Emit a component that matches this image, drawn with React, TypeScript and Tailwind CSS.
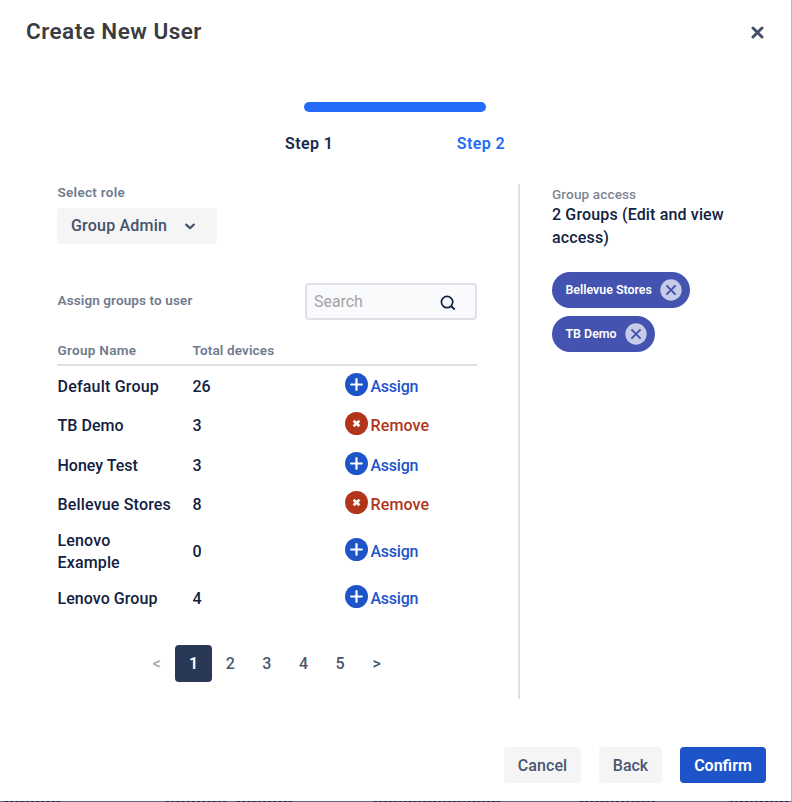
import type { ReactNode } from "react";

type Group = { name: string; devices: number; assigned: boolean; height: string; spacing: string };

const groups: Group[] = [
  { name: "Default Group", devices: 26, assigned: false, height: "h-[39.6px]", spacing: "tracking-[0.2px]" },
  { name: "TB Demo", devices: 3, assigned: true, height: "h-[39.6px]", spacing: "tracking-[0.05px]" },
  { name: "Honey Test", devices: 3, assigned: false, height: "h-[39.6px]", spacing: "tracking-normal" },
  { name: "Bellevue Stores", devices: 8, assigned: true, height: "h-[39.6px]", spacing: "tracking-[0.17px]" },
  { name: "Lenovo Example", devices: 0, assigned: false, height: "h-[54px]", spacing: "tracking-[0.15px]" },
  { name: "Lenovo Group", devices: 4, assigned: false, height: "h-[39.6px]", spacing: "tracking-[0.06px]" },
];

function Action({ assigned }: { assigned: boolean }) {
  return (
    <button className={`flex items-center gap-[2.5px] ${assigned ? "text-[#b1341b]" : "text-[#1d55c8]"}`}>
      <svg className="mb-[3.5px] h-[23px] w-[23px] shrink-0" viewBox="0 0 23 23" fill="none">
        <circle cx="11.5" cy="11.5" r="11.5" fill="currentColor" />
        {assigned ? (
          <path d="M8.6 8.8l5.8 5.4M14.4 8.8l-5.8 5.4" stroke="#fff" strokeWidth="2.6" />
        ) : (
          <path d="M11.5 6.2v10.6M6.2 11.5h10.6" stroke="#fff" strokeWidth="2.2" strokeLinecap="round" />
        )}
      </svg>
      <span className={assigned ? "pt-[2px] tracking-[0.12px]" : "pt-[2px] tracking-[-0.25px]"}>
        {assigned ? "Remove" : "Assign"}
      </span>
    </button>
  );
}

function Chip({ children, width }: { children: ReactNode; width: string }) {
  return (
    <div className={`flex h-9 items-center justify-between rounded-full bg-[#4353af] pr-[7.5px] pl-[13.5px] text-white ${width}`}>
      <span className="text-[12.4px] font-semibold whitespace-nowrap">{children}</span>
      <svg className="h-[22px] w-[22px] shrink-0" viewBox="0 0 22 22" fill="none">
        <circle cx="11" cy="11" r="10.7" fill="#c7cbe7" />
        <path d="M6.4 6.4l9.2 9.2M15.6 6.4l-9.2 9.2" stroke="#4353af" strokeWidth="2" />
      </svg>
    </div>
  );
}

// Sections of the dimmed page text that peek out below the dialog.
const backdropText = [
  { left: "left-[5px]", width: "w-[55px]" },
  { left: "left-[166px]", width: "w-[60px]" },
  { left: "left-[237px]", width: "w-[55px]" },
  { left: "left-[374px]", width: "w-[126px]" },
  { left: "left-[580px]", width: "w-[75px]" },
  { left: "left-[730px]", width: "w-[58px]" },
];

const label = "text-[13.5px] leading-[18px] font-semibold text-[#6f7a8e]";

export default function App() {
  return (
    <div className="relative flex h-[802px] w-[792px] flex-col border-r border-b border-r-[#b7b7c4] border-b-[#626a82] bg-white font-[Roboto,'Liberation_Sans',sans-serif] text-[16px] font-medium text-[#12213f]">
      <header className="flex h-16 shrink-0 items-center justify-between pr-[27px] pl-[26px]">
        <h1 className="text-[22.5px] font-semibold tracking-[0.47px] text-[#3b3c42]">Create New User</h1>
        <button aria-label="Close">
          <svg className="h-[13px] w-[13px]" viewBox="0 0 13 13" fill="none">
            <path d="M2 2l9 9M11 2l-9 9" stroke="#435069" strokeWidth="3" strokeLinecap="round" />
          </svg>
        </button>
      </header>

      <div className="ml-[285px] flex h-[120px] w-[220px] shrink-0 flex-col pt-[38px]">
        <div className="ml-[19px] h-[10px] w-[182px] rounded-full bg-[#246bf9]" />
        <div className="mt-5 flex justify-between leading-6 font-semibold tracking-[0.4px] text-[#1b294b]">
          <span>Step 1</span>
          <span className="text-[#246bf9]">Step 2</span>
        </div>
      </div>

      <main className="flex h-[515px] shrink-0">
        <section className="flex w-[520px] flex-col border-r-2 border-[#dfdfe6] pl-[57px]">
          <span className={`${label} -mt-px pl-[0.5px] tracking-[0.3px]`}>Select role</span>
          <button className="mt-[7px] flex h-9 w-[160px] items-center justify-between rounded-[4px] bg-[#f5f5f5] pr-[21px] pl-[14px] text-[#45526b]">
            <span className="tracking-[0.2px]">Group Admin</span>
            <svg className="h-[12px] w-[12px]" viewBox="0 0 12 12" fill="none">
              <path d="M2.2 4.6l3.8 3.6 3.8-3.6" stroke="currentColor" strokeWidth="2.2" strokeLinecap="round" strokeLinejoin="round" />
            </svg>
          </button>
          <div className="mt-[39px] flex w-[420px] items-center justify-between">
            <span className={`${label} pb-[4px] pl-[0.5px] tracking-[0.12px]`}>Assign groups to user</span>
            <div className="flex h-[37px] w-[172px] items-center justify-between rounded-[4px] border-2 border-[#dfe0e7] bg-[#f9fafc] pr-[19px] pl-[7px]">
              <span className="font-normal tracking-[-0.05px] text-[#a4a4a6]">Search</span>
              <svg className="mt-[3px] h-[16px] w-[16px]" viewBox="0 0 17 17" fill="none">
                <circle cx="7.5" cy="7.5" r="6" stroke="#12213f" strokeWidth="1.8" />
                <path d="M12 12l3.7 3.4" stroke="#12213f" strokeWidth="2" />
              </svg>
            </div>
          </div>

          <div className="mt-[21px] w-[420px]">
            <div className="grid h-[25px] grid-cols-[135px_153px_132px] border-b-2 border-[#dfdfe6]">
              <span className={`${label} pl-[0.5px] tracking-[0.3px]`}>Group Name</span>
              <span className={`${label} pl-[0.5px] tracking-[0.15px]`}>Total devices</span>
            </div>
            {groups.map((g) => (
              <div key={g.name} className={`grid grid-cols-[135px_153px_132px] items-center leading-[22.5px] ${g.height}`}>
                <span className={`pt-[2px] pr-[20px] pl-[0.5px] ${g.spacing}`}>{g.name}</span>
                <span className="pt-[2px] pl-[0.5px]">{g.devices}</span>
                <Action assigned={g.assigned} />
              </div>
            ))}
          </div>

          <nav className="mt-[27px] ml-[81px] flex h-[37px] items-center text-center text-[#4a566e]">
            <span className="w-[37px] pt-[2px] text-[#a3abb7]">&lt;</span>
            <span className="flex h-[37px] w-[37px] items-center justify-center rounded-[4px] bg-[#2a3858] pt-[2px] font-semibold text-white">1</span>
            <span className="w-[36.6px] pt-[2px]">2</span>
            <span className="w-[36.6px] pt-[2px]">3</span>
            <span className="w-[36.6px] pt-[2px]">4</span>
            <span className="w-[36.6px] pt-[2px]">5</span>
            <span className="w-[36.6px] pt-[2px]">&gt;</span>
          </nav>
        </section>

        <aside className="flex w-[230px] flex-col items-start pt-[1px] pl-8">
          <span className="text-[13.5px] leading-[18px] font-medium tracking-[0.15px] text-[#7c8595]">Group access</span>
          <p className="mt-[1px] w-[190px] leading-[22.5px] tracking-[0.15px]">2 Groups (Edit and view access)</p>
          <div className="mt-[23px] flex flex-col gap-2">
            <Chip width="w-[137.5px]">Bellevue Stores</Chip>
            <Chip width="w-[102.5px]">TB Demo</Chip>
          </div>
        </aside>
      </main>

      <footer className="mt-[48px] flex h-9 shrink-0 justify-end gap-[18px] pr-[25px] text-[#4a566e]">
        <button className="h-9 w-[77px] rounded-[4px] bg-[#f5f5f5] pt-px tracking-[0.05px]">Cancel</button>
        <button className="h-9 w-[63px] rounded-[4px] bg-[#f5f5f5] pt-px">Back</button>
        <button className="h-9 w-[86px] rounded-[4px] bg-[#1d55c8] pt-px font-semibold text-white">Confirm</button>
      </footer>

      {backdropText.map((t) => (
        <div key={t.left} className={`absolute -bottom-px border-b border-dashed border-[#1f2945] ${t.left} ${t.width}`} />
      ))}
    </div>
  );
}
